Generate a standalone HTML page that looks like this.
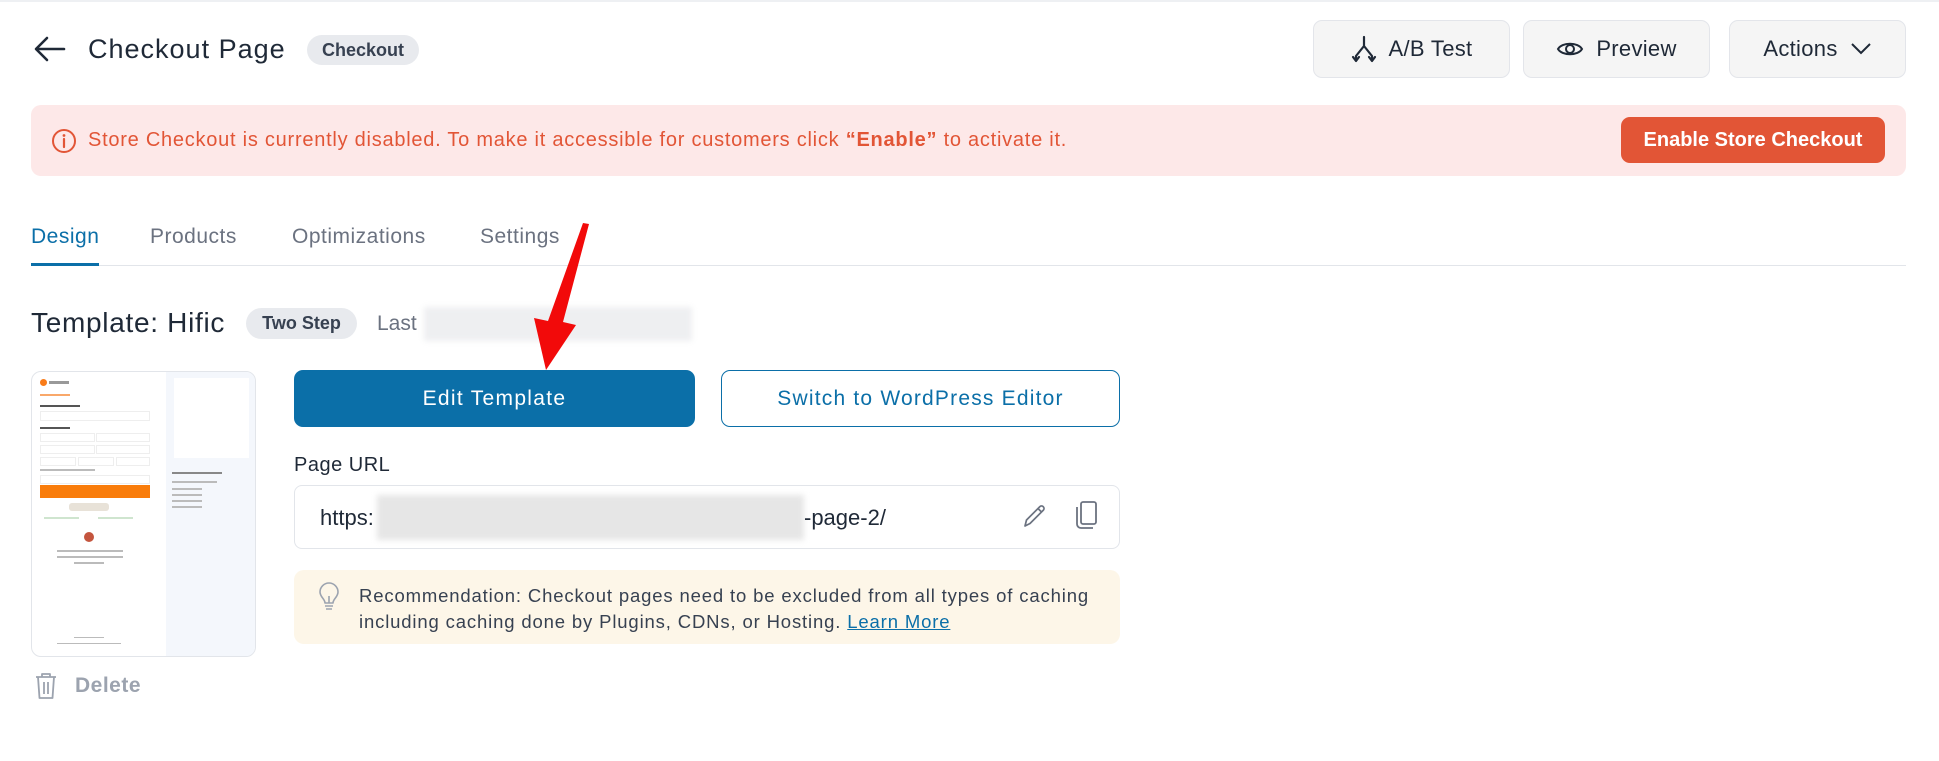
<!DOCTYPE html>
<html><head><meta charset="utf-8"><style>
*{box-sizing:border-box;margin:0;padding:0}
body{width:1939px;height:761px;background:#fff;font-family:"Liberation Sans",sans-serif;position:relative;overflow:hidden;color:#1f2937}
.a{position:absolute}
.btn{position:absolute;background:#f5f5f5;border:1px solid #e3e5ea;border-radius:9px;display:flex;align-items:center;justify-content:center;font-size:22px;color:#1f2937;font-weight:500;gap:12px;letter-spacing:0.3px}
.pill{position:absolute;background:#e8eaee;border-radius:16px;display:flex;align-items:center;justify-content:center;font-weight:700;color:#374151}
.tab{position:absolute;top:225px;font-size:21px;color:#6b7280;font-weight:500;letter-spacing:0.5px}
</style></head><body>
<div class="a" style="left:0;top:0;width:1939px;height:2px;background:#eef0f3"></div>
<svg class="a" style="left:34px;top:36px" width="32" height="26" viewBox="0 0 32 26"><path d="M30 13H3M13 2L2 13l11 11" fill="none" stroke="#1f2937" stroke-width="2.6" stroke-linecap="round" stroke-linejoin="round"/></svg>
<div class="a" style="left:88px;top:34px;font-size:27px;font-weight:500;color:#1f2937;letter-spacing:1px">Checkout Page</div>
<div class="pill" style="left:307px;top:35px;width:112px;height:30px;font-size:18px">Checkout</div>
<div class="btn" style="left:1313px;top:20px;width:197px;height:58px"><svg width="26" height="28" viewBox="0 0 26 28"><path d="M13 2v9M13 11L5 21v4M13 11l8 10v4M2 22l3 4 3-4M18 22l3 4 3-4" fill="none" stroke="#1f2937" stroke-width="2.2" stroke-linecap="round" stroke-linejoin="round"/></svg>A/B Test</div>
<div class="btn" style="left:1523px;top:20px;width:187px;height:58px"><svg width="28" height="20" viewBox="0 0 28 20"><path d="M2 10C6 3 22 3 26 10C22 17 6 17 2 10Z" fill="none" stroke="#1f2937" stroke-width="2"/><circle cx="14" cy="10" r="4" fill="none" stroke="#1f2937" stroke-width="2"/></svg>Preview</div>
<div class="btn" style="left:1729px;top:20px;width:177px;height:58px">Actions <svg width="22" height="14" viewBox="0 0 22 14"><path d="M2 2l9 9 9-9" fill="none" stroke="#1f2937" stroke-width="2"/></svg></div>

<div class="a" style="left:31px;top:105px;width:1875px;height:71px;background:#fde8e8;border-radius:10px"></div>
<svg class="a" style="left:51px;top:128px" width="26" height="26" viewBox="0 0 26 26"><circle cx="13" cy="13" r="11" fill="none" stroke="#e25536" stroke-width="2"/><path d="M13 11v8" stroke="#e25536" stroke-width="2.2" stroke-linecap="round"/><circle cx="13" cy="7.5" r="1.4" fill="#e25536"/></svg>
<div class="a" style="left:88px;top:129px;font-size:20px;color:#e25536;letter-spacing:0.75px">Store Checkout is currently disabled. To make it accessible for customers click <b>“Enable”</b> to activate it.</div>
<div class="a" style="left:1621px;top:117px;width:264px;height:46px;background:#e25536;border-radius:9px;color:#fff;font-weight:700;font-size:20px;display:flex;align-items:center;justify-content:center">Enable Store Checkout</div>

<div class="tab" style="left:31px;color:#0b6fa8">Design</div>
<div class="tab" style="left:150px">Products</div>
<div class="tab" style="left:292px">Optimizations</div>
<div class="tab" style="left:480px">Settings</div>
<div class="a" style="left:31px;top:265px;width:1875px;height:1px;background:#e2e5ea"></div>
<div class="a" style="left:31px;top:263px;width:68px;height:3px;background:#0b6fa8"></div>

<div class="a" style="left:31px;top:307px;font-size:28px;font-weight:500;letter-spacing:0.7px">Template: Hific</div>
<div class="pill" style="left:246px;top:308px;width:111px;height:31px;font-size:18px">Two Step</div>
<div class="a" style="left:377px;top:312px;font-size:21px;color:#6b7280">Last</div>
<div class="a" style="left:424px;top:307px;width:268px;height:34px;background:#eeeff1;filter:blur(3px)"></div>

<div class="a" style="left:31px;top:371px;width:225px;height:286px;border:1px solid #e2e5ea;border-radius:10px;overflow:hidden;background:#fff">
 <div class="a" style="left:134px;top:0;width:91px;height:286px;background:#f4f7fc"></div>
 <div class="a" style="left:142px;top:6px;width:75px;height:80px;background:#fff"></div>
 <div class="a" style="left:8px;top:7px;width:7px;height:7px;border-radius:50%;background:#f97c1a"></div>
 <div class="a" style="left:17px;top:9px;width:20px;height:3px;background:#999"></div>
 <div class="a" style="left:8px;top:22px;width:30px;height:2px;background:#f9a86a"></div>
 <div class="a" style="left:8px;top:33px;width:40px;height:2px;background:#555"></div>
 <div class="a" style="left:8px;top:39px;width:110px;height:10px;border:1px solid #eee"></div>
 <div class="a" style="left:8px;top:55px;width:30px;height:2px;background:#555"></div>
 <div class="a" style="left:8px;top:61px;width:55px;height:9px;border:1px solid #eee"></div><div class="a" style="left:64px;top:61px;width:54px;height:9px;border:1px solid #eee"></div>
 <div class="a" style="left:8px;top:73px;width:55px;height:9px;border:1px solid #eee"></div><div class="a" style="left:64px;top:73px;width:54px;height:9px;border:1px solid #eee"></div>
 <div class="a" style="left:8px;top:85px;width:36px;height:9px;border:1px solid #eee"></div><div class="a" style="left:46px;top:85px;width:36px;height:9px;border:1px solid #eee"></div><div class="a" style="left:84px;top:85px;width:34px;height:9px;border:1px solid #eee"></div>
 <div class="a" style="left:8px;top:97px;width:55px;height:2px;background:#bbb"></div>
 <div class="a" style="left:8px;top:103px;width:110px;height:9px;border:1px solid #eee"></div>
 <div class="a" style="left:8px;top:113px;width:110px;height:13px;background:#f97c0a"></div>
 <div class="a" style="left:37px;top:131px;width:40px;height:8px;background:#e8e2d8;border-radius:3px"></div>
 <div class="a" style="left:12px;top:145px;width:35px;height:2px;background:#cfe5cf"></div><div class="a" style="left:66px;top:145px;width:35px;height:2px;background:#cfe5cf"></div>
 <div class="a" style="left:52px;top:160px;width:10px;height:10px;border-radius:50%;background:#c4553e"></div>
 <div class="a" style="left:25px;top:178px;width:66px;height:2px;background:#bbb"></div><div class="a" style="left:25px;top:184px;width:66px;height:2px;background:#bbb"></div><div class="a" style="left:42px;top:190px;width:30px;height:2px;background:#bbb"></div>
 <div class="a" style="left:140px;top:100px;width:50px;height:2px;background:#888"></div>
 <div class="a" style="left:140px;top:109px;width:45px;height:2px;background:#bbb"></div>
 <div class="a" style="left:140px;top:116px;width:30px;height:2px;background:#bbb"></div>
 <div class="a" style="left:140px;top:122px;width:30px;height:2px;background:#bbb"></div>
 <div class="a" style="left:140px;top:128px;width:30px;height:2px;background:#bbb"></div>
 <div class="a" style="left:140px;top:134px;width:30px;height:2px;background:#bbb"></div>
 <div class="a" style="left:42px;top:265px;width:30px;height:1px;background:#bbb"></div><div class="a" style="left:25px;top:271px;width:64px;height:1px;background:#bbb"></div>
</div>
<svg class="a" style="left:34px;top:672px" width="24" height="28" viewBox="0 0 24 28"><path d="M2 5h20M8 5V2h8v3M4 5l1.5 21h13L20 5M10 10v12M14 10v12" fill="none" stroke="#9ca3af" stroke-width="1.8" stroke-linejoin="round"/></svg>
<div class="a" style="left:75px;top:674px;font-size:21px;font-weight:700;color:#9ca3af;letter-spacing:0.5px">Delete</div>

<div class="a" style="left:294px;top:370px;width:401px;height:57px;background:#0b6fa8;border-radius:9px;color:#fff;font-size:21px;font-weight:500;display:flex;align-items:center;justify-content:center;letter-spacing:1.3px">Edit Template</div>
<div class="a" style="left:721px;top:370px;width:399px;height:57px;border:1.5px solid #0b6fa8;border-radius:9px;color:#0b6fa8;font-size:21px;font-weight:500;display:flex;align-items:center;justify-content:center;letter-spacing:1.2px">Switch to WordPress Editor</div>
<div class="a" style="left:294px;top:454px;font-size:20px;font-weight:500;letter-spacing:0.5px">Page URL</div>
<div class="a" style="left:294px;top:485px;width:826px;height:64px;border:1px solid #e2e5ea;border-radius:8px"></div>
<div class="a" style="left:320px;top:505px;font-size:22px;color:#1f2937">https:</div>
<div class="a" style="left:377px;top:495px;width:427px;height:45px;background:#e6e6e6;filter:blur(3px)"></div>
<div class="a" style="left:804px;top:505px;font-size:22px;color:#1f2937">-page-2/</div>
<svg class="a" style="left:1021px;top:501px" width="28" height="28" viewBox="0 0 28 28"><path d="M4 25l1.5-6L19 5.5a2.5 2.5 0 0 1 3.5 3.5L9 22.5z M17 7.5l3.5 3.5" fill="none" stroke="#6b7280" stroke-width="1.7" stroke-linejoin="round"/></svg>
<svg class="a" style="left:1074px;top:500px" width="26" height="30" viewBox="0 0 26 30"><rect x="7" y="2" width="15" height="22" rx="2" fill="none" stroke="#6b7280" stroke-width="1.8"/><path d="M3 7v17a4 4 0 0 0 4 4h12" fill="none" stroke="#6b7280" stroke-width="1.8"/></svg>

<div class="a" style="left:294px;top:570px;width:826px;height:74px;background:#fdf6e8;border-radius:10px"></div>
<svg class="a" style="left:318px;top:582px" width="22" height="30" viewBox="0 0 22 30"><path d="M7 21c0-4-5-6-5-11a9 9 0 0 1 18 0c0 5-5 7-5 11zM7 24h8M8 27h6M11 21v-7" fill="none" stroke="#9ca3af" stroke-width="1.6" stroke-linejoin="round"/></svg>
<div class="a" style="left:359px;top:583px;font-size:18.5px;line-height:26px;color:#374151;letter-spacing:0.85px">Recommendation: Checkout pages need to be excluded from all types of caching<br>including caching done by Plugins, CDNs, or Hosting. <span style="color:#0b6fa8;text-decoration:underline">Learn More</span></div>

<svg class="a" style="left:0;top:0" width="1939" height="761"><path d="M589 224L563 322L576 325L546 370L534 318L548 321L583 223Z" fill="#f20a0a"/></svg>
</body></html>
